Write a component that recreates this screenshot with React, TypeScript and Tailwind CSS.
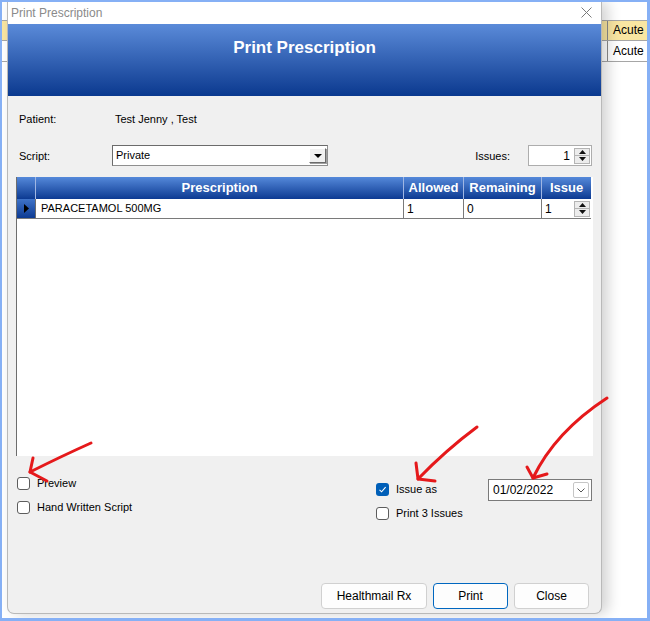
import React from "react";

const font = { fontFamily: '"Liberation Sans", Arial, sans-serif' };

const Checkbox: React.FC<{ checked?: boolean; label: string }> = ({ checked, label }) => (
  <div className="flex items-center h-[13px]">
    {checked ? (
      <div className="w-[13px] h-[13px] rounded-[3px] bg-[#005fb8] flex items-center justify-center">
        <svg width="9" height="9" viewBox="0 0 9 9">
          <path d="M1.5 4.8 L3.6 6.8 L7.6 2.2" stroke="white" strokeWidth="1.1" fill="none" />
        </svg>
      </div>
    ) : (
      <div className="w-[13px] h-[13px] rounded-[3px] bg-white border border-[#5d5d5d]" />
    )}
    <span className="ml-[7px] text-[11px] text-black leading-none">{label}</span>
  </div>
);

const SpinButtons: React.FC = () => (
  <div className="flex flex-col w-[16px] h-[16px] border border-[#b4b4b4] bg-[#ececec]">
    <div className="flex-1 flex items-center justify-center border-b border-[#b4b4b4]">
      <svg width="7" height="4" viewBox="0 0 7 4">
        <path d="M0 4 L3.5 0 L7 4 Z" fill="#111" />
      </svg>
    </div>
    <div className="flex-1 flex items-center justify-center">
      <svg width="7" height="4" viewBox="0 0 7 4">
        <path d="M0 0 L3.5 4 L7 0 Z" fill="#111" />
      </svg>
    </div>
  </div>
);

const headerCell =
  "h-full flex items-center justify-center text-white font-bold text-[13px] border-r border-[#9fb6e3]";

const App: React.FC = () => {
  return (
    <div
      className="relative w-[650px] h-[621px] overflow-hidden bg-white border-l-2 border-t-2 border-r-[3px] border-b-[3px] border-[#86b0f5]"
      style={font}
    >
      {/* window behind the dialog */}
      <div className="flex flex-col">
        <div className="h-[18px]" />
        <div className="h-[21px] bg-[#f9e6a2] border-y border-[#a6a6a6] flex">
          <div className="ml-[605px] pl-[5px] border-l border-[#8c8c8c] text-[12px] leading-[19px] text-black">
            Acute
          </div>
        </div>
        <div className="h-[21px] border-b border-[#a6a6a6] flex">
          <div className="ml-[605px] pl-[5px] border-l border-[#8c8c8c] text-[12px] leading-[20px] text-black">
            Acute
          </div>
        </div>
      </div>

      {/* dialog */}
      <div className="absolute left-[5px] top-0 w-[595px] h-[612px] flex flex-col bg-[#f0f0f0] rounded-b-[7px] border border-t-0 border-[#b9b9b9] shadow-[6px_0_14px_rgba(0,0,0,0.18)]">
        <div className="h-[22px] bg-white flex items-center justify-between pl-[3px] pr-[9px] pb-[1px]">
          <span className="text-[12px] text-[#8a8a8a]">Print Prescription</span>
          <svg width="11" height="11" viewBox="0 0 11 11">
            <path d="M0.5 0.5 L10.5 10.5 M10.5 0.5 L0.5 10.5" stroke="#7a7a7a" strokeWidth="1" />
          </svg>
        </div>
        <div className="h-[72px] bg-gradient-to-b from-[#5b8bd9] to-[#0a398f] flex items-center justify-center pb-[24px]">
          <span className="text-white font-bold text-[17px]">Print Prescription</span>
        </div>

        <div className="flex-1 flex flex-col text-[11px] text-black">
          {/* patient */}
          <div className="mt-[16px] h-[14px] flex items-center">
            <span className="ml-[11px] w-[96px]">Patient:</span>
            <span>Test Jenny , Test</span>
          </div>

          {/* script + issues */}
          <div className="mt-[19px] h-[21px] flex items-center">
            <span className="ml-[11px] w-[93px] pt-[2px]">Script:</span>
            <div className="w-[216px] h-[21px] bg-white border border-[#8f8f8f] border-t-[#6b6b6b] border-l-[#6b6b6b] flex items-center">
              <span className="flex-1 pl-[3px]">Private</span>
              <div className="w-[17px] h-[15px] mr-[1px] bg-[#f0f0f0] border border-[#fff] border-r-[#6b6b6b] border-b-[#6b6b6b] shadow-[1px_1px_0_#a0a0a0] flex items-center justify-center">
                <svg width="8" height="4" viewBox="0 0 8 4">
                  <path d="M0 0 L8 0 L4 4 Z" fill="#000" />
                </svg>
              </div>
            </div>
            <span className="ml-auto mr-[18px] pt-[2px]">Issues:</span>
            <div className="mr-[9px] w-[64px] h-[21px] bg-white border border-[#adadad] flex items-center justify-end pr-[1px]">
              <span className="text-[12px] mr-[4px]">1</span>
              <SpinButtons />
            </div>
          </div>

          {/* grid */}
          <div className="mt-[11px] ml-[8px] w-[577px] h-[279px] bg-white border-l border-[#6d6d6d] flex flex-col">
            <div className="h-[22px] flex bg-gradient-to-b from-[#5589da] to-[#0c3a92] w-[574px]">
              <div className="w-[19px] h-full border-r border-[#9fb6e3]" />
              <div className={`${headerCell} w-[368px]`}>Prescription</div>
              <div className={`${headerCell} w-[60px]`}>Allowed</div>
              <div className={`${headerCell} w-[78px]`}>Remaining</div>
              <div className={`${headerCell} w-[49px] border-r-0`}>Issue</div>
            </div>
            <div className="h-[20px] flex border-b border-[#7a7a7a] w-[574px]">
              <div className="w-[19px] h-full bg-gradient-to-b from-[#3f73c8] to-[#0c3a92] border-r border-[#6d6d6d] flex items-center justify-center">
                <svg width="5" height="9" viewBox="0 0 5 9">
                  <path d="M0 0 L5 4.5 L0 9 Z" fill="#000" />
                </svg>
              </div>
              <div className="w-[368px] h-full border-r border-[#7a7a7a] flex items-center pl-[5px] text-[11px]">
                PARACETAMOL 500MG
              </div>
              <div className="w-[60px] h-full border-r border-[#7a7a7a] flex items-center pl-[3px] text-[12px]">1</div>
              <div className="w-[78px] h-full border-r border-[#7a7a7a] flex items-center pl-[3px] text-[12px]">0</div>
              <div className="w-[49px] h-full flex items-center justify-between pl-[3px] pr-[1px] text-[12px]">
                <span>1</span>
                <SpinButtons />
              </div>
            </div>
          </div>

          {/* options */}
          <div className="flex mt-[21px]">
            <div className="ml-[9px] flex flex-col gap-[11px]">
              <Checkbox label="Preview" />
              <Checkbox label="Hand Written Script" />
            </div>
            <div className="ml-auto mr-[9px] flex">
              <div className="w-[112px] mt-[6px] flex flex-col gap-[11px]">
                <Checkbox checked label="Issue as" />
                <Checkbox label="Print 3 Issues" />
              </div>
              <div className="mt-[2px] w-[104px] h-[22px] bg-white border border-[#7a7a7a] flex items-center pl-[4px] pr-[2px]">
                <span className="flex-1 text-[12px]">01/02/2022</span>
                <div className="w-[16px] h-[16px] rounded-[2px] border border-[#c6c6c6] flex items-center justify-center">
                  <svg width="8" height="5" viewBox="0 0 8 5">
                    <path d="M0.5 0.5 L4 4 L7.5 0.5" stroke="#555" strokeWidth="1" fill="none" />
                  </svg>
                </div>
              </div>
            </div>
          </div>

          {/* buttons */}
          <div className="mt-auto mb-[4px] flex justify-end gap-[6px] mr-[12px] text-[12px]">
            <button className="w-[106px] h-[26px] bg-[#fdfdfd] border border-[#d0d0d0] rounded-[4px]">Healthmail Rx</button>
            <button className="w-[75px] h-[26px] bg-[#fdfdfd] border border-[#0067c0] rounded-[4px]">Print</button>
            <button className="w-[75px] h-[26px] bg-[#fdfdfd] border border-[#d0d0d0] rounded-[4px]">Close</button>
          </div>
        </div>
      </div>

      {/* red annotation arrows */}
      <svg className="absolute -left-[2px] -top-[2px] pointer-events-none" width="650" height="621" viewBox="0 0 650 621">
        <g stroke="#e5191b" strokeWidth="3" fill="none" strokeLinecap="round" strokeLinejoin="round">
          <path d="M91 443 Q62 456 30 472" />
          <path d="M30 472 L33 458 M30 472 L47 481" />
          <path d="M477 427 Q446 450 418 479" />
          <path d="M418 479 L416 463 M418 479 L435 481" />
          <path d="M607 398 Q555 432 533 478" />
          <path d="M533 478 L527 467 M533 478 L547 474" />
        </g>
      </svg>
    </div>
  );
};

export default App;
